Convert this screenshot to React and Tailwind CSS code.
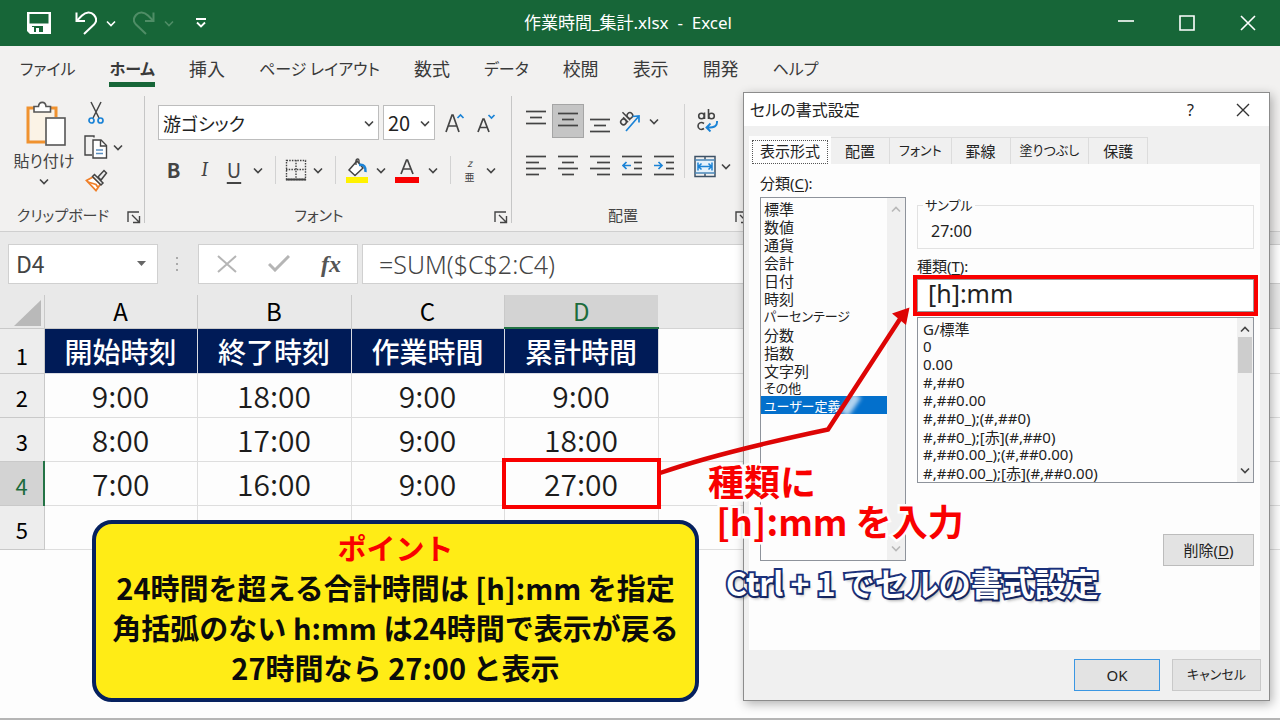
import React from 'react';

const ribbonTabs = [
  { name: 'ファイル', kana: true },
  { name: 'ホーム', kana: true, active: true },
  { name: '挿入' },
  { name: 'ページ レイアウト', kana: true },
  { name: '数式' },
  { name: 'データ', kana: true },
  { name: '校閲' },
  { name: '表示' },
  { name: '開発' },
  { name: 'ヘルプ', kana: true },
];

const columns = [
  { letter: 'A', title: '開始時刻' },
  { letter: 'B', title: '終了時刻' },
  { letter: 'C', title: '作業時間' },
  { letter: 'D', title: '累計時間' },
];

const rows = [
  ['9:00', '18:00', '9:00', '9:00'],
  ['8:00', '17:00', '9:00', '18:00'],
  ['7:00', '16:00', '9:00', '27:00'],
  ['', '', '', ''],
];

const dialogTabs = [
  { name: '配置' },
  { name: 'フォント', kana: true },
  { name: '罫線' },
  { name: '塗りつぶし', kana: true },
  { name: '保護' },
];

const categories = [
  { name: '標準' },
  { name: '数値' },
  { name: '通貨' },
  { name: '会計' },
  { name: '日付' },
  { name: '時刻' },
  { name: 'パーセンテージ', kana: true },
  { name: '分数' },
  { name: '指数' },
  { name: '文字列' },
  { name: 'その他', kana: true },
  { name: 'ユーザー定義', kana: true },
];

const formats = [
  'G/標準',
  '0',
  '0.00',
  '#,##0',
  '#,##0.00',
  '#,##0_);(#,##0)',
  '#,##0_);[赤](#,##0)',
  '#,##0.00_);(#,##0.00)',
  '#,##0.00_);[赤](#,##0.00)',
];

/* ---------- Icons ---------- */

const Chevron = ({ up = false, className = 'text-[#444]' }) => (
  <svg width="10" height="7" viewBox="0 0 10 7" fill="none" stroke="currentColor" strokeWidth="1.6" className={className}>
    <path d={up ? 'M1 5.5 5 1.5l4 4' : 'M1 1.5 5 5.5l4-4'} />
  </svg>
);

const SaveIcon = () => (
  <svg width="24" height="24" viewBox="0 0 24 24" fill="none">
    <path fill="#fff" fillRule="evenodd" d="M0 1h24v22H3l-3-3zM2.500 3v9.500h19V3zM5 15v6h11v-6z" />
    <path fill="#fff" d="M5 16h2v5H5zM9 17h3v4H9z" />
  </svg>
);

const UndoIcon = ({ flip = false }) => (
  <svg
    width="22"
    height="24"
    viewBox="0 0 22 24"
    fill="none"
    stroke="currentColor"
    strokeWidth="2"
    className={flip ? '-scale-x-100 text-[#4f8d66]' : 'text-white'}
  >
    <path d="M1.500 1.500v8.500h8.500" />
    <path d="M2 9.500 7 4.500C11 .5 16 .5 19 4s2.500 7 0 9.500L9 23" />
  </svg>
);

const PasteIcon = () => (
  <svg width="40" height="45" viewBox="0 0 40 45" fill="none">
    <path d="M9 7H2v34h17" stroke="#f0922f" strokeWidth="3" />
    <path d="M23 7h7v9" stroke="#f0922f" strokeWidth="3" />
    <path d="M4.500 9.500h23V17H20v22H4.500z" fill="#fbf3e6" />
    <path d="M8 11V5.500h4.500C13 0 19.500 0 20 5.500h4.500V11z" fill="#fff" stroke="#555" strokeWidth="1.600" />
    <rect x="20" y="17" width="19" height="27" fill="#fff" stroke="#555" strokeWidth="1.600" />
  </svg>
);

const CutIcon = () => (
  <svg width="16" height="24" viewBox="0 0 16 24" fill="none">
    <path d="M3 1 11 17M13 1 5 17" stroke="#444" strokeWidth="1.500" />
    <circle cx="3.500" cy="19.500" r="2.500" stroke="#1b83d6" strokeWidth="1.700" />
    <circle cx="12.500" cy="19.500" r="2.500" stroke="#1b83d6" strokeWidth="1.700" />
  </svg>
);

const CopyIcon = () => (
  <svg width="24" height="24" viewBox="0 0 24 24" fill="none" stroke="#444" strokeWidth="1.400">
    <path d="M10 2.500V1H1v19h7" />
    <path d="M9 5h8l5.500 5.500V23H9z" fill="#fff" />
    <path d="M16.500 5v6h6" />
    <path d="M12 15h7M12 18.500h7" stroke="#5b8fc0" />
  </svg>
);

const BrushIcon = () => (
  <svg width="23" height="23" viewBox="0 0 23 23" fill="none">
    <path d="M8 8 1.500 11.500 11 21.500l4.500-6.500z" fill="#fff" stroke="#f0802a" strokeWidth="1.800" />
    <path d="M3 13l8 2.500 2 3" stroke="#f0802a" strokeWidth="1.800" />
    <path d="m9.500 5.500 8.500 8.500-2 2-8.500-8.500zM13 8l6-6.500 2.500 2.500L16 11z" fill="#eee" stroke="#444" strokeWidth="1.500" />
  </svg>
);

const LauncherIcon = () => (
  <svg width="14" height="14" viewBox="0 0 14 14" fill="none" stroke="#444" strokeWidth="1.400">
    <path d="M1 12V2h11M5 5l7 7M12.500 6v6.500H6" />
  </svg>
);

const FontSizeIcon = ({ grow }) => (
  <svg width="20" height="22" viewBox="0 0 20 22" fill="none" strokeWidth="1.700">
    <path d={grow ? 'M1 20 7 3h1l6 17M3 14h9' : 'M1 20 6 7h1l5 13M3 15.500h7'} stroke="#444" />
    <path d={grow ? 'M12.500 6 15.500 3l3 3' : 'M11.500 3l3 3 3-3'} stroke="#1b83d6" />
  </svg>
);

const BordersIcon = () => (
  <svg width="22" height="22" viewBox="0 0 22 22" fill="none" stroke="#444">
    <path d="M1.500 1.500h19v19h-19zM11 1v19M1 10.500h20" strokeWidth="1.400" strokeDasharray="1.500 1.200" />
    <path d="M1 20.500h20" strokeWidth="2" />
  </svg>
);

const FillIcon = () => (
  <svg width="24" height="26" viewBox="0 0 24 26" fill="none">
    <path d="M4 13 12 4l6 7-8 7.500z" fill="#fff" stroke="#444" strokeWidth="1.500" />
    <path d="M11 8V3.500C11 1.500 14 1.500 14 3.500V6" stroke="#444" strokeWidth="1.300" />
    <path d="M14 8c5-1 7 2 6.500 7" stroke="#1b83d6" strokeWidth="2.600" />
    <path d="M1 20h22v6H1z" fill="#fff200" />
  </svg>
);

const FontColorIcon = () => (
  <svg width="24" height="26" viewBox="0 0 24 26" fill="none">
    <path d="M6 17 11.500 3h1L18 17M8 12h8" stroke="#444" strokeWidth="1.700" />
    <path d="M0 20h24v6H0z" fill="#f80000" />
  </svg>
);

/* Horizontal strokes: each entry is [x1, x2] on its own line */
const LinesIcon = ({ lines, gap = 6, children }) => (
  <svg width="20" height="22" viewBox="0 0 20 22" fill="none" stroke="#444" strokeWidth="1.700">
    {lines.map(([x1, x2], i) => (
      <path key={i} d={`M${x1} ${i * gap + 1.5}H${x2}`} />
    ))}
    {children}
  </svg>
);

const OrientationIcon = () => (
  <svg width="24" height="24" viewBox="0 0 24 24" fill="none" strokeWidth="1.500">
    <g stroke="#444" transform="rotate(-45 8 9)">
      <circle cx="3.500" cy="10" r="2.800" />
      <path d="M6.500 6.500V13.500M9.500 2.500v11" />
      <circle cx="12.500" cy="10" r="2.800" />
    </g>
    <path d="M8 22 21 7M14.500 7.500l6.500-.5v6.500" stroke="#1b83d6" strokeWidth="1.700" />
  </svg>
);

const WrapIcon = () => (
  <svg width="22" height="24" viewBox="0 0 22 24" fill="none" strokeWidth="1.600">
    <g stroke="#444">
      <circle cx="4.500" cy="8" r="2.800" />
      <path d="M7.500 4.500V11M11.500 1v10" />
      <circle cx="14.500" cy="8" r="2.800" />
      <path d="M7 15.500c-3-2-6-.5-6 2.500s3 4.500 6 2.500" />
    </g>
    <path d="M20 13c.5 5-2 6.500-9.500 6.500M13.500 15.500l-4 4 4 4" stroke="#1b83d6" strokeWidth="1.900" />
  </svg>
);

const MergeIcon = () => (
  <svg width="22" height="23" viewBox="0 0 22 23" fill="none">
    <path d="M2 5h18v13H2z" fill="#e4f1fb" />
    <path d="M1 1.500h20v20H1zM11 1.500v3M11 18.500v3" stroke="#3d5266" strokeWidth="1.500" />
    <path d="M1 5h20M1 18h20" stroke="#4a86b8" strokeWidth="1.300" />
    <path d="M4 11.500h14M7.500 8.500l-3 3 3 3M14.500 8.500l3 3-3 3M4 7.500v8M18 7.500v8" stroke="#1b83d6" strokeWidth="1.500" />
  </svg>
);

/* ---------- Ribbon ---------- */

const IconButton = ({ label, className = '', children }) => (
  <button type="button" aria-label={label} className={`flex items-center justify-center ${className}`}>
    {children}
  </button>
);

const MenuArrow = ({ label }) => (
  <IconButton label={label} className="h-6 w-5">
    <Chevron />
  </IconButton>
);

const Divider = () => <div className="mx-[7px] h-7 w-px bg-[#d2d2d2]" />;

const GroupLabel = ({ children }) => (
  <div className="flex h-4 items-center pr-[2px] leading-4">
    <span className="flex-1 text-center">{children}</span>
    <IconButton label={`${children}の設定`} className="h-4 w-4 pt-1">
      <LauncherIcon />
    </IconButton>
  </div>
);

const TitleBar = () => (
  <header className="grid h-[46px] grid-cols-[1fr_auto_1fr] items-center bg-[#176638] text-white">
    <div className="flex items-center pl-[27px]">
      <IconButton label="上書き保存"><SaveIcon /></IconButton>
      <IconButton label="元に戻す" className="ml-6"><UndoIcon /></IconButton>
      <IconButton label="元に戻す一覧" className="ml-[9px]"><Chevron className="text-white" /></IconButton>
      <IconButton label="やり直し" className="ml-[17px]"><UndoIcon flip /></IconButton>
      <IconButton label="やり直し一覧" className="ml-[9px]"><Chevron className="text-[#4f8d66]" /></IconButton>
      <IconButton label="クイックアクセスのカスタマイズ" className="ml-[21px]">
        <svg width="12" height="10" viewBox="0 0 12 10" fill="none" stroke="#fff" strokeWidth="1.800">
          <path d="M1 1h10M2 4.500l4 4 4-4" />
        </svg>
      </IconButton>
    </div>
    <h1 className="mr-6 font-['Noto_Sans','Noto_Sans_CJK_JP',sans-serif] text-[17px] whitespace-pre">作業時間_集計.xlsx  -  Excel</h1>
    <div className="flex items-center justify-end gap-[45px] pr-6">
      <IconButton label="最小化">
        <svg width="16" height="16" viewBox="0 0 16 16" stroke="#fff" strokeWidth="1.600"><path d="M0 6h16" /></svg>
      </IconButton>
      <IconButton label="最大化">
        <svg width="16" height="16" viewBox="0 0 16 16" fill="none" stroke="#fff" strokeWidth="1.600"><path d="M1 1h14v14H1z" /></svg>
      </IconButton>
      <IconButton label="閉じる">
        <svg width="16" height="16" viewBox="0 0 16 16" stroke="#fff" strokeWidth="1.600"><path d="m1 1 14 14M15 1 1 15" /></svg>
      </IconButton>
    </div>
  </header>
);

const RibbonTabs = () => (
  <nav className="flex h-[42px] gap-[34px] pl-5 text-[#3a3a3a]">
    {ribbonTabs.map(({ name, kana, active }) => (
      <button
        key={name}
        type="button"
        className={`mb-px border-b-[5px] pt-2 whitespace-nowrap ${kana ? 'text-base' : 'text-lg'} ${
          active ? 'border-[#176638] font-bold' : 'border-transparent'
        }`}
      >
        {name}
      </button>
    ))}
  </nav>
);

const ClipboardGroup = () => (
  <section className="my-2 flex w-[145px] flex-col justify-between border-r border-[#c6c6c6]">
    <div className="flex">
      <button type="button" className="flex w-[84px] flex-col items-center pt-[5px] pl-2">
        <PasteIcon />
        <span className="mt-[2px] mr-1 text-base leading-6">貼り付け</span>
        <span className="mt-[6px] mr-1"><Chevron /></span>
      </button>
      <div className="flex flex-col gap-[10px] pt-[5px]">
        <IconButton label="切り取り" className="w-6"><CutIcon /></IconButton>
        <div className="flex items-center">
          <IconButton label="コピー"><CopyIcon /></IconButton>
          <MenuArrow label="コピー一覧" />
        </div>
        <IconButton label="書式のコピー" className="w-6"><BrushIcon /></IconButton>
      </div>
    </div>
    <GroupLabel>クリップボード</GroupLabel>
  </section>
);

const Combo = ({ label, value, className }) => (
  <div className={`relative h-[35px] border border-[#bdbdbd] bg-white ${className}`}>
    <select aria-label={label} className="h-full w-full appearance-none pl-1 text-[#222]">
      <option>{value}</option>
    </select>
    <span className="pointer-events-none absolute top-[14px] right-1"><Chevron /></span>
  </div>
);

const FontGroup = () => (
  <section className="my-2 flex w-[367px] flex-col justify-between border-r border-[#c6c6c6]">
    <div className="pt-[9px]">
      <div className="flex items-center gap-1 pl-[13px]">
        <Combo label="フォント名" value="游ゴシック" className="w-[221px] text-lg" />
        <Combo label="フォント サイズ" value="20" className="w-[52px] text-xl" />
        <IconButton label="フォント サイズの拡大" className="ml-1 h-8 w-6"><FontSizeIcon grow /></IconButton>
        <IconButton label="フォント サイズの縮小" className="ml-1 h-8 w-6"><FontSizeIcon /></IconButton>
      </div>
      <div className="mt-4 flex items-center pl-[13px] text-xl text-[#444]">
        <button type="button" aria-label="太字" className="w-[31px] font-bold">B</button>
        <button type="button" aria-label="斜体" className="w-[31px] font-serif italic">I</button>
        <button type="button" aria-label="下線" className="w-[28px] underline underline-offset-4">U</button>
        <MenuArrow label="下線一覧" />
        <Divider />
        <IconButton label="罫線" className="w-[25px]"><BordersIcon /></IconButton>
        <MenuArrow label="罫線一覧" />
        <Divider />
        <IconButton label="塗りつぶしの色" className="w-7"><FillIcon /></IconButton>
        <MenuArrow label="塗りつぶしの色一覧" />
        <IconButton label="フォントの色" className="w-8"><FontColorIcon /></IconButton>
        <MenuArrow label="フォントの色一覧" />
        <Divider />
        <button type="button" aria-label="ふりがな" className="flex w-[23px] flex-col items-center text-[10px] leading-[14px]">
          <span className="italic">z</span>
          <span>亜</span>
        </button>
        <MenuArrow label="ふりがな一覧" />
      </div>
    </div>
    <GroupLabel>フォント</GroupLabel>
  </section>
);

const AlignmentGroup = () => (
  <section className="my-2 flex w-[240px] flex-col justify-between">
    <div className="flex">
      <div className="flex w-[172px] flex-col gap-[17px] pt-2 pl-2">
        <div className="flex items-center">
          <IconButton label="上揃え" className="h-[34px] w-8">
            <LinesIcon lines={[[0, 20], [4, 16], [0, 20]]} />
          </IconButton>
          <IconButton label="上下中央揃え" className="h-[34px] w-8 border border-[#a5a5a5] bg-[#c5c5c5] pt-1">
            <LinesIcon lines={[[0, 20], [4, 16], [0, 20]]} />
          </IconButton>
          <IconButton label="下揃え" className="h-[34px] w-8 pt-4">
            <LinesIcon lines={[[0, 20], [4, 16], [0, 20]]} />
          </IconButton>
          <IconButton label="方向" className="w-7"><OrientationIcon /></IconButton>
          <MenuArrow label="方向一覧" />
        </div>
        <div className="flex items-center">
          <IconButton label="左揃え" className="w-8">
            <LinesIcon lines={[[0, 20], [0, 13], [0, 20], [0, 13]]} />
          </IconButton>
          <IconButton label="中央揃え" className="w-8">
            <LinesIcon lines={[[0, 20], [4, 16], [0, 20], [4, 16]]} />
          </IconButton>
          <IconButton label="右揃え" className="w-8">
            <LinesIcon lines={[[0, 20], [7, 20], [0, 20], [7, 20]]} />
          </IconButton>
          <IconButton label="インデントを減らす" className="w-8">
            <LinesIcon lines={[[0, 20], [12, 20], [12, 20], [0, 20]]}>
              <path d="M1 10.500h8M4.500 7 1 10.500 4.500 14" stroke="#1b83d6" />
            </LinesIcon>
          </IconButton>
          <IconButton label="インデントを増やす" className="w-8">
            <LinesIcon lines={[[0, 20], [12, 20], [12, 20], [0, 20]]}>
              <path d="M0 10.500h8M4.500 7 8 10.500 4.500 14" stroke="#1b83d6" />
            </LinesIcon>
          </IconButton>
        </div>
      </div>
      <div className="mt-2 flex flex-col gap-[22px] border-l border-[#d2d2d2] pl-[9px]">
        <IconButton label="折り返して全体を表示する" className="w-7 pt-1"><WrapIcon /></IconButton>
        <div className="flex items-center">
          <IconButton label="セルを結合して中央揃え"><MergeIcon /></IconButton>
          <MenuArrow label="結合一覧" />
        </div>
      </div>
    </div>
    <GroupLabel>配置</GroupLabel>
  </section>
);

const FormulaBar = () => (
  <div className="flex h-16 items-center border-t border-[#cfcfcf] bg-[#e9e9e9] pl-2 text-[23px] text-[#444]">
    <div className="flex h-10 w-[150px] items-center justify-between border border-[#d0d0d0] bg-white px-[7px]">
      <input aria-label="名前ボックス" defaultValue="D4" className="w-20 bg-transparent" />
      <svg width="18" height="6" viewBox="0 0 18 6"><path d="M5 0h9L9.500 5z" fill="#666" /></svg>
    </div>
    <svg width="4" height="14" viewBox="0 0 4 14" className="mx-[18px]" fill="#aaa">
      <path d="M0 0h2v2H0zM0 6h2v2H0zM0 12h2v2H0z" />
    </svg>
    <div className="flex h-10 w-[160px] items-center justify-between border border-[#d0d0d0] bg-white pr-4 pl-[18px]">
      <IconButton label="キャンセル">
        <svg width="20" height="18" viewBox="0 0 20 18" stroke="#b5b5b5" strokeWidth="2"><path d="M1 1l18 16M19 1 1 17" /></svg>
      </IconButton>
      <IconButton label="入力">
        <svg width="22" height="17" viewBox="0 0 22 17" fill="none" stroke="#b5b5b5" strokeWidth="3"><path d="m1 9 6 6L21 1" /></svg>
      </IconButton>
      <button type="button" aria-label="関数の挿入" className="font-['Liberation_Serif',serif] text-2xl font-bold text-[#555] italic">fx</button>
    </div>
    <input
      aria-label="数式バー"
      defaultValue="=SUM($C$2:C4)"
      className="ml-1 h-10 min-w-0 flex-1 border border-r-0 border-[#d0d0d0] bg-white pl-4 font-['Noto_Sans',sans-serif] text-[25px] font-light"
    />
  </div>
);

/* ---------- Sheet ---------- */

const Sheet = () => (
  <table className="w-full table-fixed border-collapse text-center">
    <colgroup>
      <col className="w-11" />
      <col className="w-[153px]" />
      <col className="w-[154px]" />
      <col className="w-[153px]" />
      <col className="w-[154px]" />
      <col />
    </colgroup>
    <thead>
      <tr className="h-[33px] bg-[#e9e9e9] text-2xl text-black">
        <th className="border-r border-b border-[#c9c9c9] p-0 pt-1">
          <svg width="27" height="26" viewBox="0 0 27 26" className="ml-[14px]"><path d="M27 0v26H0z" fill="#b9b9b9" /></svg>
        </th>
        {columns.map(({ letter }) => (
          <th
            key={letter}
            className={
              letter === 'D'
                ? 'border-b-2 border-[#237345] bg-[#d3d3d3] p-0 leading-8 font-normal text-[#1c6b3c]'
                : 'border-r border-b border-[#c9c9c9] p-0 leading-8 font-normal'
            }
          >
            {letter}
          </th>
        ))}
        <th className="border-b border-[#d4d4d4] p-0" />
      </tr>
    </thead>
    <tbody>
      <tr className="h-[45px]">
        <th className="border-r border-b border-[#c9c9c9] bg-[#ededed] p-0 pt-2 text-[22px] leading-8 font-normal text-black">1</th>
        {columns.map(({ title }) => (
          <th key={title} className="border border-[#d9dbe2] bg-[#001b57] p-0 text-[28px] leading-10 font-medium text-white">
            {title}
          </th>
        ))}
        <td className="border-b border-[#dedede]" />
      </tr>
      {rows.map((row, i) => (
        <tr key={i} className="h-11 text-[#1c1c1c]">
          <th
            className={
              i === 2
                ? 'border-r-2 border-b border-r-[#237345] border-b-[#c9c9c9] bg-[#d3d3d3] p-0 pt-1 text-[22px] leading-8 font-normal text-[#1c6b3c]'
                : 'border-r border-b border-[#c9c9c9] bg-[#ededed] p-0 pt-1 text-[22px] leading-8 font-normal text-black'
            }
          >
            {i + 2}
          </th>
          {row.map((value, j) => (
            <td key={j} className="relative border border-[#dedede] p-0 text-[30px] leading-10 font-[350]">
              {value}
              {value === '27:00' && <span className="absolute -inset-x-[3px] -inset-y-1 border-4 border-[#f90000]" />}
            </td>
          ))}
          <td className="border-b border-[#dedede]" />
        </tr>
      ))}
    </tbody>
  </table>
);

/* ---------- Format cells dialog ---------- */

const FormatDialog = () => (
  <div
    role="dialog"
    aria-label="セルの書式設定"
    className="absolute top-[92px] left-[743px] flex w-[527px] flex-col border border-[#8c8c8c] bg-[#f0f0f0] font-['Noto_Sans','Noto_Sans_CJK_JP',sans-serif] text-[15px] text-[#222] shadow-[2px_3px_10px_rgba(0,0,0,0.3)]"
  >
    <div className="flex h-[33px] items-center bg-white pr-[19px] pl-[6px]">
      <h2 className="flex-1 text-base">セルの書式設定</h2>
      <button type="button" aria-label="ヘルプ" className="mr-[42px] text-base">?</button>
      <IconButton label="閉じる">
        <svg width="14" height="14" viewBox="0 0 14 14" stroke="#333" strokeWidth="1.400"><path d="m1 1 12 12M13 1 1 13" /></svg>
      </IconButton>
    </div>
    <div role="tablist" className="mt-[10px] ml-[5px] flex items-end">
      <button type="button" role="tab" aria-selected="true" className="h-7 bg-[#fdfdfd] px-[3px] pt-[3px]">
        <span className="flex h-6 items-center border border-dotted border-[#555] px-[7px]">表示形式</span>
      </button>
      {dialogTabs.map(({ name, kana }) => (
        <button
          key={name}
          type="button"
          role="tab"
          aria-selected="false"
          className={`h-[27px] border-t border-r border-[#dcdcdc] ${kana ? 'px-[9px] text-[13px]' : 'px-[14px]'}`}
        >
          {name}
        </button>
      ))}
    </div>
    <div className="mr-[9px] ml-[5px] flex h-[486px] gap-[11px] bg-[#fdfdfd] pt-[9px] pr-[6px] pl-[11px]">
      <div className="flex w-[146px] flex-col">
        <label htmlFor="category" className="h-6 leading-5">分類(<u className="underline-offset-2">C</u>):</label>
        <div className="flex h-[364px] border border-[#8e939b]">
          <select
            id="category"
            size={12}
            defaultValue="ユーザー定義"
            className="min-w-0 flex-1 overflow-hidden bg-transparent p-0"
          >
            {categories.map(({ name, kana }) => (
              <option
                key={name}
                className={`h-[18px] min-h-0 p-0 pl-[3px] leading-[15px] checked:bg-[linear-gradient(#0370cc,#0370cc)] checked:text-white ${
                  kana ? 'text-[13px]' : 'text-[15px]'
                }`}
              >
                {name}
              </option>
            ))}
          </select>
          <div className="flex w-[18px] flex-col items-center justify-between bg-[#f0f0f0] py-2">
            <Chevron up className="text-[#b8b8b8]" />
            <Chevron className="text-[#b8b8b8]" />
          </div>
        </div>
      </div>
      <div className="flex min-w-0 flex-1 flex-col">
        <fieldset className="mt-[22px] h-[54px] border border-[#e2e2e2] pl-[13px]">
          <legend className="-ml-2 px-[2px] text-[13px] leading-5">サンプル</legend>
          <output className="block text-base leading-8">27:00</output>
        </fieldset>
        <label htmlFor="format" className="mt-[7px] h-[23px] leading-5">種類(<u className="underline-offset-2">T</u>):</label>
        <input
          id="format"
          defaultValue="[h]:mm"
          className="h-[33px] w-full border border-[#9a9a9a] bg-white pb-1 pl-[10px] text-[25px] outline-4 outline-[#f90000]"
        />
        <div className="mt-[5px] flex h-[166px] border border-[#8e939b]">
          <select aria-label="表示形式の一覧" size={9} className="min-w-0 flex-1 overflow-hidden bg-transparent p-0">
            {formats.map((code) => (
              <option key={code} className="h-[18px] min-h-0 p-0 pl-[5px] leading-[15px]">{code}</option>
            ))}
          </select>
          <div className="flex w-4 flex-col items-center bg-[#f0f0f0] pt-2 pb-2">
            <Chevron up />
            <div className="mt-1 mb-auto h-9 w-[14px] bg-[#cdcdcd]" />
            <Chevron />
          </div>
        </div>
        <button type="button" className="mt-[51px] h-8 w-[91px] self-end border border-[#bcbcbc] bg-[#e3e3e3]">
          削除(<u className="underline-offset-2">D</u>)
        </button>
      </div>
    </div>
    <div className="flex justify-end gap-3 px-2 pt-[9px] pb-[9px]">
      <button type="button" className="h-8 w-[86px] border border-[#3b97e3] bg-[#e3e3e3]">OK</button>
      <button type="button" className="h-8 w-[89px] border border-[#c9c9c9] bg-[#e3e3e3] text-[13px]">キャンセル</button>
    </div>
  </div>
);

/* ---------- Callouts ---------- */

const Arrow = () => (
  <svg className="pointer-events-none absolute top-[300px] left-[655px]" width="260" height="180" viewBox="655 300 260 180" fill="none">
    <path d="M844 414 857 395" stroke="#fff" strokeOpacity="0.7" strokeWidth="10" className="blur-[2px]" />
    <path d="M660 473C700 459 750 446 828 429.500L900 319" stroke="#dd0505" strokeWidth="4.500" />
    <path d="M909.500 307.500 892 313.500 906 325z" fill="#dd0505" />
  </svg>
);

const Callouts = () => (
  <div className="[font-feature-settings:normal]">
    <Arrow />
    <p className="absolute top-[460px] left-[708px] text-4xl leading-10 font-bold whitespace-pre text-[#f90000] [-webkit-text-stroke:5px_#fdfdfd] [paint-order:stroke_fill]">
      種類に{'\n'} [h]:mm を入力
    </p>
    <p className="absolute top-[562px] left-[726px] text-[32px] leading-10 font-bold whitespace-nowrap text-white [-webkit-text-stroke:4px_#1b317c] [paint-order:stroke_fill] [text-shadow:2px_3px_3px_rgba(0,0,0,0.3)]">
      Ctrl + 1 でセルの書式設定
    </p>
    <aside className="absolute top-[520px] left-[92px] w-[607px] rounded-[20px] border-4 border-[#06215f] bg-[#ffec16] pt-[3px] pb-[11px] text-center text-[29px] leading-10 font-bold whitespace-nowrap text-[#0b0b0b]">
      <h3 className="text-[#f90000]">ポイント</h3>
      <p>24時間を超える合計時間は [h]:mm を指定</p>
      <p>角括弧のない h:mm は24時間で表示が戻る</p>
      <p>27時間なら 27:00 と表示</p>
    </aside>
  </div>
);

export default function App() {
  return (
    <div className="relative min-h-screen overflow-hidden border-b-2 border-[#b5b5b5] bg-[#fdfdfd] font-['Noto_Sans_CJK_JP',sans-serif] [font-feature-settings:'palt']">
      <TitleBar />
      <div className="bg-[#f2f1f0]">
        <RibbonTabs />
        <div className="flex h-[143px] text-[15px] text-[#444]">
          <ClipboardGroup />
          <FontGroup />
          <AlignmentGroup />
        </div>
      </div>
      <FormulaBar />
      <Sheet />
      <FormatDialog />
      <Callouts />
    </div>
  );
}
